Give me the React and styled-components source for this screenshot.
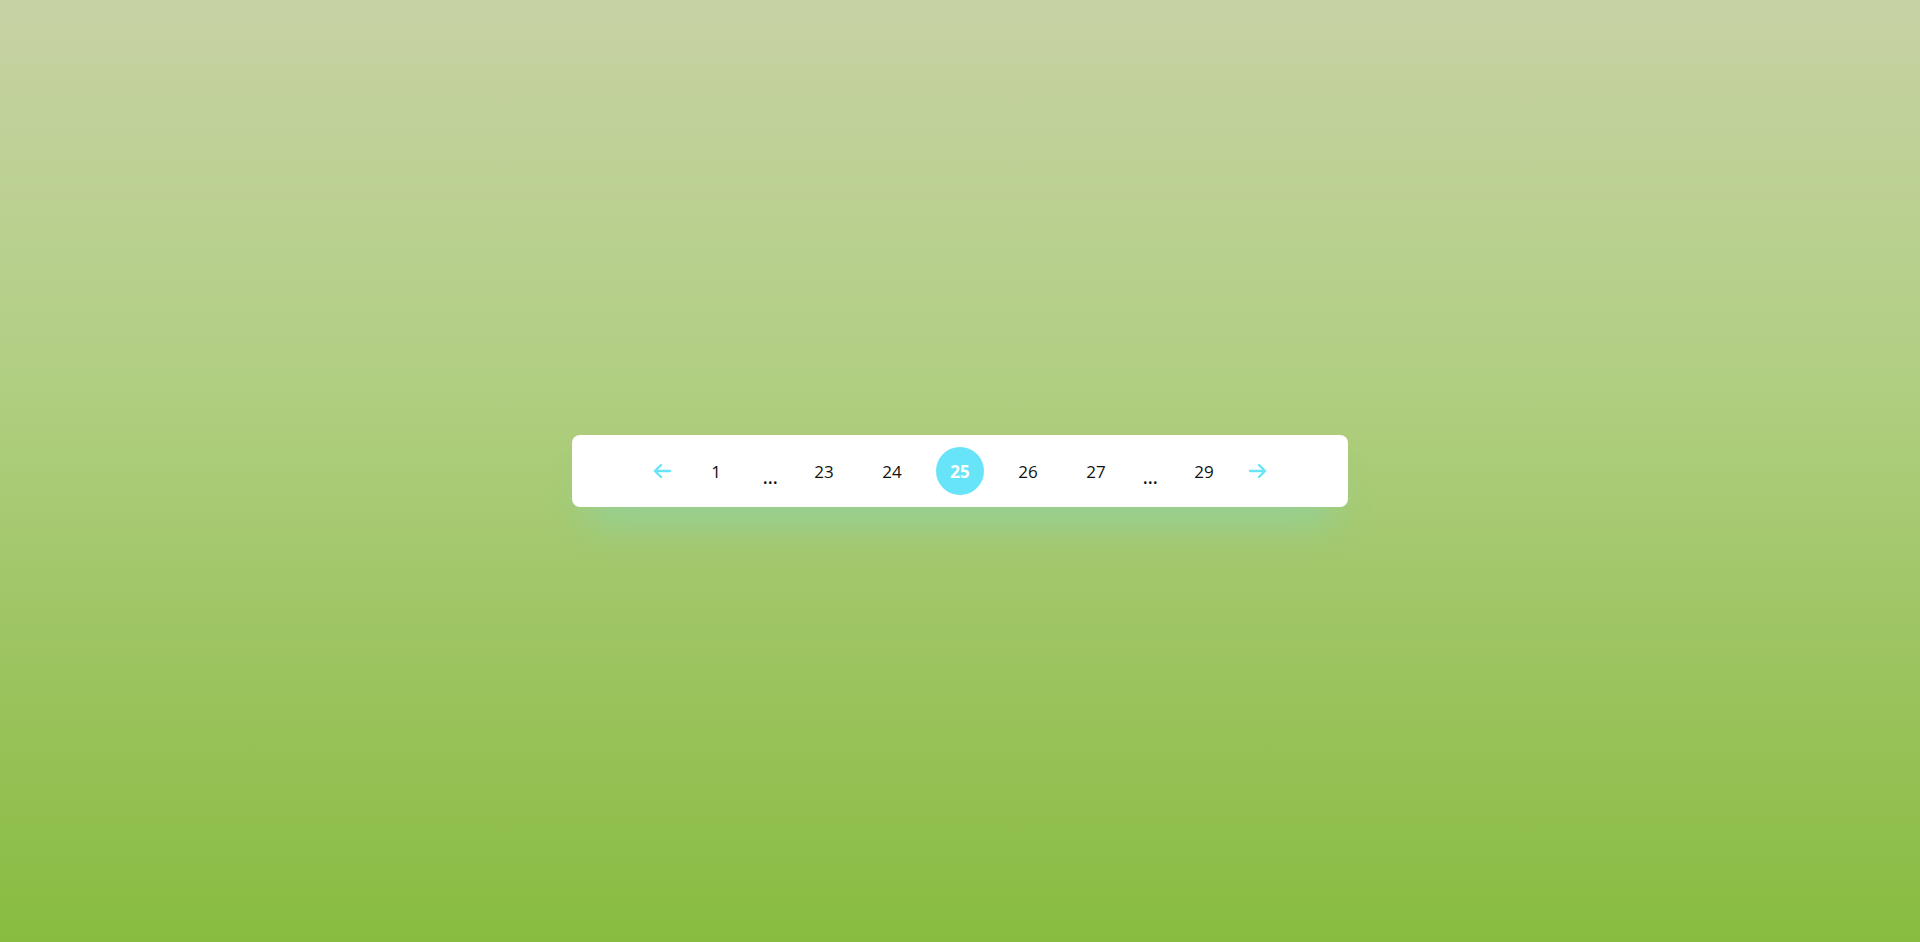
import React, { useState } from 'react';
import styled, { createGlobalStyle } from 'styled-components';

const GlobalStyle = createGlobalStyle`
  html, body {
    margin: 0;
    padding: 0;
    height: 100%;
  }
  body {
    font-family: 'Open Sans', 'Noto Sans', sans-serif;
  }
  #root {
    height: 100%;
  }
`;

const Page = styled.div`
  min-height: 100vh;
  display: flex;
  align-items: center;
  justify-content: center;
  background: linear-gradient(180deg, #c7d2a4 0%, #b1cf82 40%, #9cc460 70%, #88bc40 100%);
`;

const Bar = styled.nav`
  display: flex;
  align-items: center;
  height: 72px;
  padding: 0 70px;
  background: #ffffff;
  border-radius: 8px;
  box-shadow: 0 30px 40px -14px rgba(104, 228, 248, 0.3);
`;

const PageButton = styled.button`
  width: 48px;
  height: 48px;
  margin: 0 10px;
  padding: 0;
  border: none;
  border-radius: 50%;
  cursor: pointer;
  font-family: inherit;
  font-size: 17px;
  font-weight: ${(p) => (p.$active ? 700 : 400)};
  color: ${(p) => (p.$active ? '#ffffff' : '#111111')};
  background: ${(p) => (p.$active ? '#68e4f8' : 'transparent')};
  display: flex;
  align-items: center;
  justify-content: center;
`;

const Dots = styled.span`
  width: 20px;
  margin: 0 10px;
  padding-top: 10px;
  text-align: center;
  font-size: 21px;
  line-height: 1;
  color: #111111;
  letter-spacing: -0.5px;
`;

const ArrowButton = styled.button`
  width: 20px;
  height: 48px;
  margin: 0 10px;
  padding: 0;
  border: none;
  background: transparent;
  cursor: pointer;
  display: flex;
  align-items: center;
  justify-content: center;
  color: #68e4f8;
`;

const Arrow = ({ dir }) => (
  <svg width="18" height="16" viewBox="0 0 18 16" fill="none" stroke="currentColor" strokeWidth="2.4" strokeLinecap="round" strokeLinejoin="round">
    {dir === 'left' ? (
      <>
        <path d="M17 8H2" />
        <path d="M8 2L2 8l6 6" />
      </>
    ) : (
      <>
        <path d="M1 8h15" />
        <path d="M10 2l6 6-6 6" />
      </>
    )}
  </svg>
);

const items = [1, '...', 23, 24, 25, 26, 27, '...', 29];

export default function App() {
  const [current, setCurrent] = useState(25);

  return (
    <>
      <GlobalStyle />
      <Page>
        <Bar>
          <ArrowButton onClick={() => setCurrent((c) => Math.max(1, c - 1))}>
            <Arrow dir="left" />
          </ArrowButton>
          {items.map((item, i) =>
            item === '...' ? (
              <Dots key={i}>...</Dots>
            ) : (
              <PageButton key={i} $active={item === current} onClick={() => setCurrent(item)}>
                {item}
              </PageButton>
            )
          )}
          <ArrowButton onClick={() => setCurrent((c) => Math.min(29, c + 1))}>
            <Arrow dir="right" />
          </ArrowButton>
        </Bar>
      </Page>
    </>
  );
}
